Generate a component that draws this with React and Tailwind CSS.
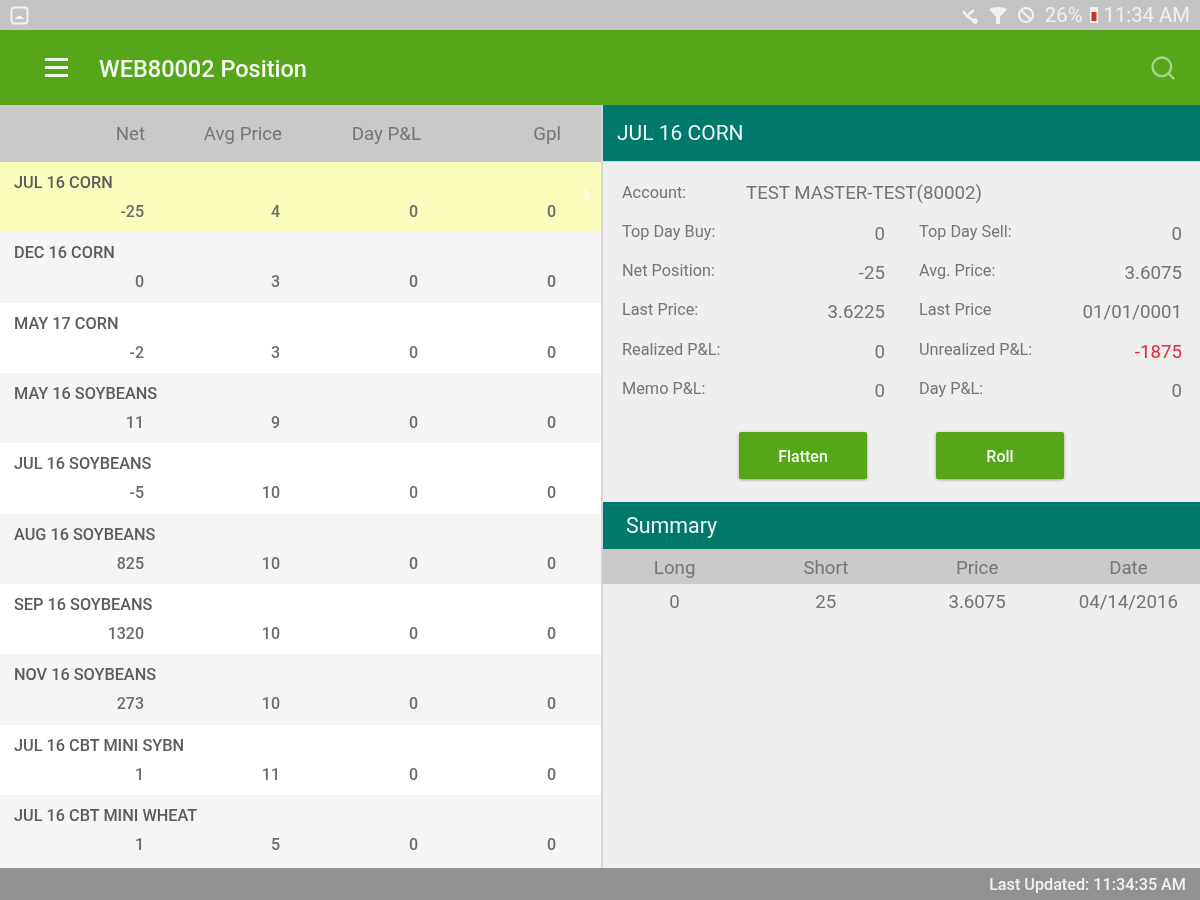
import React from 'react';
import { ChevronRight, Search } from 'lucide-react';

const positions = [
  { name: 'JUL 16 CORN', net: '-25', avg: '4' },
  { name: 'DEC 16 CORN', net: '0', avg: '3' },
  { name: 'MAY 17 CORN', net: '-2', avg: '3' },
  { name: 'MAY 16 SOYBEANS', net: '11', avg: '9' },
  { name: 'JUL 16 SOYBEANS', net: '-5', avg: '10' },
  { name: 'AUG 16 SOYBEANS', net: '825', avg: '10' },
  { name: 'SEP 16 SOYBEANS', net: '1320', avg: '10' },
  { name: 'NOV 16 SOYBEANS', net: '273', avg: '10' },
  { name: 'JUL 16 CBT MINI SYBN', net: '1', avg: '11' },
  { name: 'JUL 16 CBT MINI WHEAT', net: '1', avg: '5' },
];

const details = [
  ['Top Day Buy:', '0', 'Top Day Sell:', '0'],
  ['Net Position:', '-25', 'Avg. Price:', '3.6075'],
  ['Last Price:', '3.6225', 'Last Price', '01/01/0001'],
  ['Realized P&L:', '0', 'Unrealized P&L:', '-1875'],
  ['Memo P&L:', '0', 'Day P&L:', '0'],
];

const StatusBar = () => (
  <div className="h-[30px] bg-[#c4c4c4] flex items-center justify-between pl-[10px] pr-[10px] text-[#f1f1f1]">
    <svg width="19" height="19" viewBox="0 0 19 19" fill="none">
      <rect x="1.5" y="1.5" width="16" height="16" rx="3" stroke="#f2f2f2" strokeWidth="2" />
      <path d="M5 13 Q9.5 6 14 13 Z" fill="#f2f2f2" />
    </svg>
    <div className="flex items-center text-[20.3px] leading-none">
      <svg width="18" height="18" viewBox="0 0 18 18" className="mr-[9px]" fill="none" stroke="#f1f1f1" strokeWidth="2.5">
        <path d="M2 5 L6 10 L13 4" />
        <path d="M6 10 L13 15" />
        <circle cx="14" cy="15" r="1.5" />
      </svg>
      <svg width="20" height="20" viewBox="0 0 20 20" className="mr-[9px]" fill="#f1f1f1">
        <path d="M1 4 Q10 0 19 4 L12 12 L12 19 L8 19 L8 12 Z" />
      </svg>
      <svg width="18" height="18" viewBox="0 0 18 18" className="mr-[10px]" fill="none" stroke="#f1f1f1" strokeWidth="2">
        <circle cx="9" cy="9" r="7" />
        <path d="M4 4 L14 14" />
      </svg>
      <span className="mr-[5px]">26%</span>
      <svg width="12" height="20" viewBox="0 0 12 20" className="mr-[4px]">
        <rect x="2" y="2" width="8" height="16" fill="#efefef" />
        <rect x="3.5" y="7" width="5" height="9" fill="#c0392b" />
      </svg>
      <span>11:34 AM</span>
    </div>
  </div>
);

const TopBar = () => (
  <div className="h-[75px] bg-[#56a51b] flex items-center pl-[45px] pr-[23px]">
    <div className="w-[23px] flex flex-col gap-[5px]">
      <div className="h-[3px] bg-[#eef6e6]" />
      <div className="h-[3px] bg-[#eef6e6]" />
      <div className="h-[3px] bg-[#eef6e6]" />
    </div>
    <div className="ml-[31px] mt-[4px] text-[23.5px] font-medium text-[#f4f9ef]">WEB80002 Position</div>
    <Search className="ml-auto text-[#a5d58a]" size={28} strokeWidth={2} />
  </div>
);

const PositionRow = ({ item, index }) => {
  const bg = index === 0 ? 'bg-[#fbfdbc]' : index % 2 === 1 ? 'bg-[#f5f5f5]' : 'bg-white';
  return (
    <div className={`relative h-[70.33px] pt-[11px] ${bg}`}>
      <div className="pl-[14px] text-[16.3px] leading-[20px] font-medium text-[#5c5c5c]">{item.name}</div>
      <div className="grid grid-cols-[144px_136px_138px_138px] mt-[9px] text-[16px] leading-[20px] font-medium text-[#6b6b6b] text-right">
        <span>{item.net}</span>
        <span>{item.avg}</span>
        <span>0</span>
        <span>0</span>
      </div>
      {index === 0 && (
        <ChevronRight className="absolute right-[2px] top-[20px] text-[#fdfee8]" size={26} strokeWidth={2} />
      )}
    </div>
  );
};

const DetailRow = ({ row }) => (
  <div className="grid grid-cols-[297px_263px] h-[39.2px]">
    <div className="flex justify-between pr-[34px]">
      <span className="text-[16.3px] text-[#767676] leading-[22px]">{row[0]}</span>
      <span className="text-[18.7px] text-[#747474] leading-[24px] mt-[1px]">{row[1]}</span>
    </div>
    <div className="flex justify-between">
      <span className="text-[16.3px] text-[#767676] leading-[22px]">{row[2]}</span>
      <span className={`text-[18.7px] leading-[24px] mt-[1px] ${row[3] === '-1875' ? 'text-[#e8273c]' : 'text-[#747474]'}`}>{row[3]}</span>
    </div>
  </div>
);

const ActionButton = ({ label }) => (
  <button className="w-[128px] h-[47px] pt-[3px] bg-[#56a51b] rounded-[2px] shadow-[0_1px_3px_rgba(0,0,0,0.35)] text-[#f4f9ef] text-[16px] font-medium">
    {label}
  </button>
);

export default function App() {
  return (
    <div className="w-[1200px] h-[900px] flex flex-col overflow-hidden bg-[#eeeeee] blur-[0.6px] font-['Roboto',sans-serif]">
      <StatusBar />
      <TopBar />
      <div className="flex-1 flex min-h-0">
        {/* Liste des positions */}
        <div className="w-[601px] flex flex-col">
          <div className="h-[57px] pt-[1px] bg-[#c9c9c9] grid grid-cols-[145px_137px_139px_140px] items-center text-right text-[18.7px] text-[#767676]">
            <span>Net</span>
            <span>Avg Price</span>
            <span>Day P&amp;L</span>
            <span>Gpl</span>
          </div>
          <div className="flex-1 overflow-hidden bg-[#f5f5f5]">
            {positions.map((item, index) => (
              <PositionRow key={item.name} item={item} index={index} />
            ))}
          </div>
        </div>
        <div className="w-[2px] bg-[#d6d6d6]" />

        {/* Detail */}
        <div className="flex-1 flex flex-col">
          <div className="h-[56px] bg-[#00786c] flex items-center pl-[14px] pt-[2px] text-[21px] text-[#eef7f5]">JUL 16 CORN</div>
          <div className="h-[1px] bg-[#c9d6d6]" />
          <div className="pl-[19px] pt-[20px] h-[340px]">
            <div className="flex h-[39px]">
              <span className="w-[124px] text-[16.3px] text-[#767676] leading-[22px]">Account:</span>
              <span className="text-[18.7px] text-[#747474] leading-[24px] -mt-[1px]">TEST MASTER-TEST(80002)</span>
            </div>
            {details.map((row) => (
              <DetailRow key={row[0] + row[2]} row={row} />
            ))}
            <div className="flex pl-[117px] gap-[69px] mt-[15px]">
              <ActionButton label="Flatten" />
              <ActionButton label="Roll" />
            </div>
          </div>
          <div className="h-[47px] pt-[2px] bg-[#00786c] flex items-center pl-[23px] text-[21.4px] text-[#eef7f5]">Summary</div>
          <div className="h-[35px] bg-[#c9c9c9]">
            <div className="h-full pt-[3px] -mx-[4px] grid grid-cols-4 items-center text-center text-[18.7px] text-[#767676]">
              <span>Long</span>
              <span>Short</span>
              <span>Price</span>
              <span>Date</span>
            </div>
          </div>
          <div className="h-[37px] -mx-[4px] grid grid-cols-4 items-center text-center text-[18.7px] text-[#747474]">
            <span>0</span>
            <span>25</span>
            <span>3.6075</span>
            <span>04/14/2016</span>
          </div>
        </div>
      </div>
      <div className="h-[32px] pt-[2px] bg-[#929292] flex items-center justify-end pr-[14px] text-[16.2px] font-medium text-[#f1f1f1]">
        Last Updated: 11:34:35 AM
      </div>
    </div>
  );
}
